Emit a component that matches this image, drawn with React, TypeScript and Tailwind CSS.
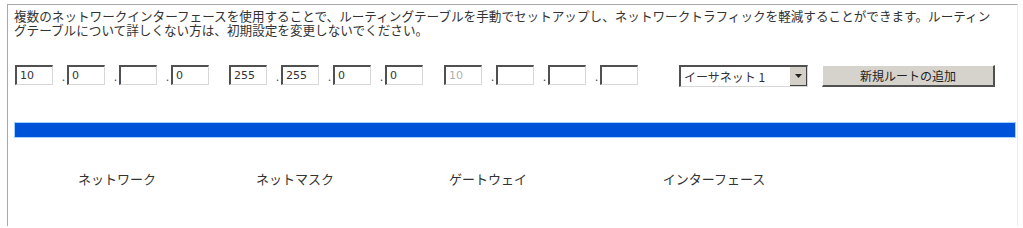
import React from 'react';

const jp = { fontFamily: '"Noto Sans CJK JP", "Noto Sans", sans-serif' };
const mono = { fontFamily: '"DejaVu Sans", Verdana, sans-serif' };

const OctetInput: React.FC<{ value?: string; disabled?: boolean }> = ({ value = '', disabled }) => (
  <div
    className={`w-[38px] h-[20px] bg-white border-t-2 border-l-2 border-r border-b border-t-[#505050] border-l-[#505050] border-r-[#d8d8d8] border-b-[#d8d8d8] pl-[3px] text-[11px] leading-[17px] ${
      disabled ? 'text-[#b0b0b0]' : 'text-[#333]'
    }`}
    style={mono}
  >
    {value}
  </div>
);

const Dot = () => (
  <span className="w-[14px] h-[20px] flex items-end justify-end pr-[2px] pb-[3px] text-[11px] leading-none text-[#444]">
    .
  </span>
);

const IpGroup: React.FC<{ values: string[]; disabled?: boolean[] }> = ({ values, disabled = [] }) => (
  <div className="flex items-start">
    {values.map((v, i) => (
      <React.Fragment key={i}>
        {i > 0 && <Dot />}
        <OctetInput value={v} disabled={disabled[i]} />
      </React.Fragment>
    ))}
  </div>
);

const HEADERS = ['ネットワーク', 'ネットマスク', 'ゲートウェイ', 'インターフェース', ''];

export default function App() {
  return (
    <div className="w-[1023px] h-[228px] bg-white overflow-hidden" style={jp}>
      <div className="ml-[7px] mt-[4px] w-[1011px] h-[222px] border-t border-l border-r border-t-[#a8a8a8] border-l-[#a8a8a8] border-r-[#ececec]">
        {/* Description */}
        <div className="mt-[4px] ml-[6px] text-[12.6px] leading-[14px] text-[#333] whitespace-nowrap">
          <div>
            複数のネットワークインターフェースを使用することで、ルーティングテーブルを手動でセットアップし、ネットワークトラフィックを軽減することができます。ルーティン
          </div>
          <div>グテーブルについて詳しくない方は、初期設定を変更しないでください。</div>
        </div>

        {/* Route inputs */}
        <div className="mt-[28px] ml-[7px] flex items-start">
          <IpGroup values={['10', '0', '', '0']} />
          <div className="ml-[20px]">
            <IpGroup values={['255', '255', '0', '0']} />
          </div>
          <div className="ml-[21px]">
            <IpGroup values={['10', '', '', '']} disabled={[true]} />
          </div>

          <div className="ml-[41px] w-[129px] h-[22px] flex bg-white border-t-2 border-l-2 border-r border-b border-t-[#505050] border-l-[#505050] border-r-[#d8d8d8] border-b-[#d8d8d8]">
            <span className="flex-1 pl-[3px] text-[12px] leading-[19px] text-[#333]">イーサネット 1</span>
            <span className="w-[17px] h-[19px] flex items-center justify-center bg-[#d4d0c8] border-r border-b border-r-[#404040] border-b-[#404040]">
              <svg width="7" height="4" viewBox="0 0 7 4">
                <path d="M0 0h7L3.5 4z" fill="#222" />
              </svg>
            </span>
          </div>

          <button className="ml-[14px] w-[173px] h-[22px] bg-[#d6d3cc] border-t border-l border-r-2 border-b-2 border-t-white border-l-white border-r-[#505050] border-b-[#505050] text-[12px] leading-[18px] text-[#222]">
            新規ルートの追加
          </button>
        </div>

        {/* Table header bar */}
        <div className="mt-[35px] ml-[6px] w-[1002px] h-[16px] bg-[#0052d9] border border-[#9fd2ff]" />

        {/* Column headings */}
        <div className="ml-[6px] w-[1002px] pt-[33px] grid grid-cols-[206px_150px_236px_216px_1fr] text-[13px] leading-[16px] text-[#333] text-center">
          {HEADERS.map((h, i) => (
            <div key={i}>{h}</div>
          ))}
        </div>
      </div>
    </div>
  );
}
